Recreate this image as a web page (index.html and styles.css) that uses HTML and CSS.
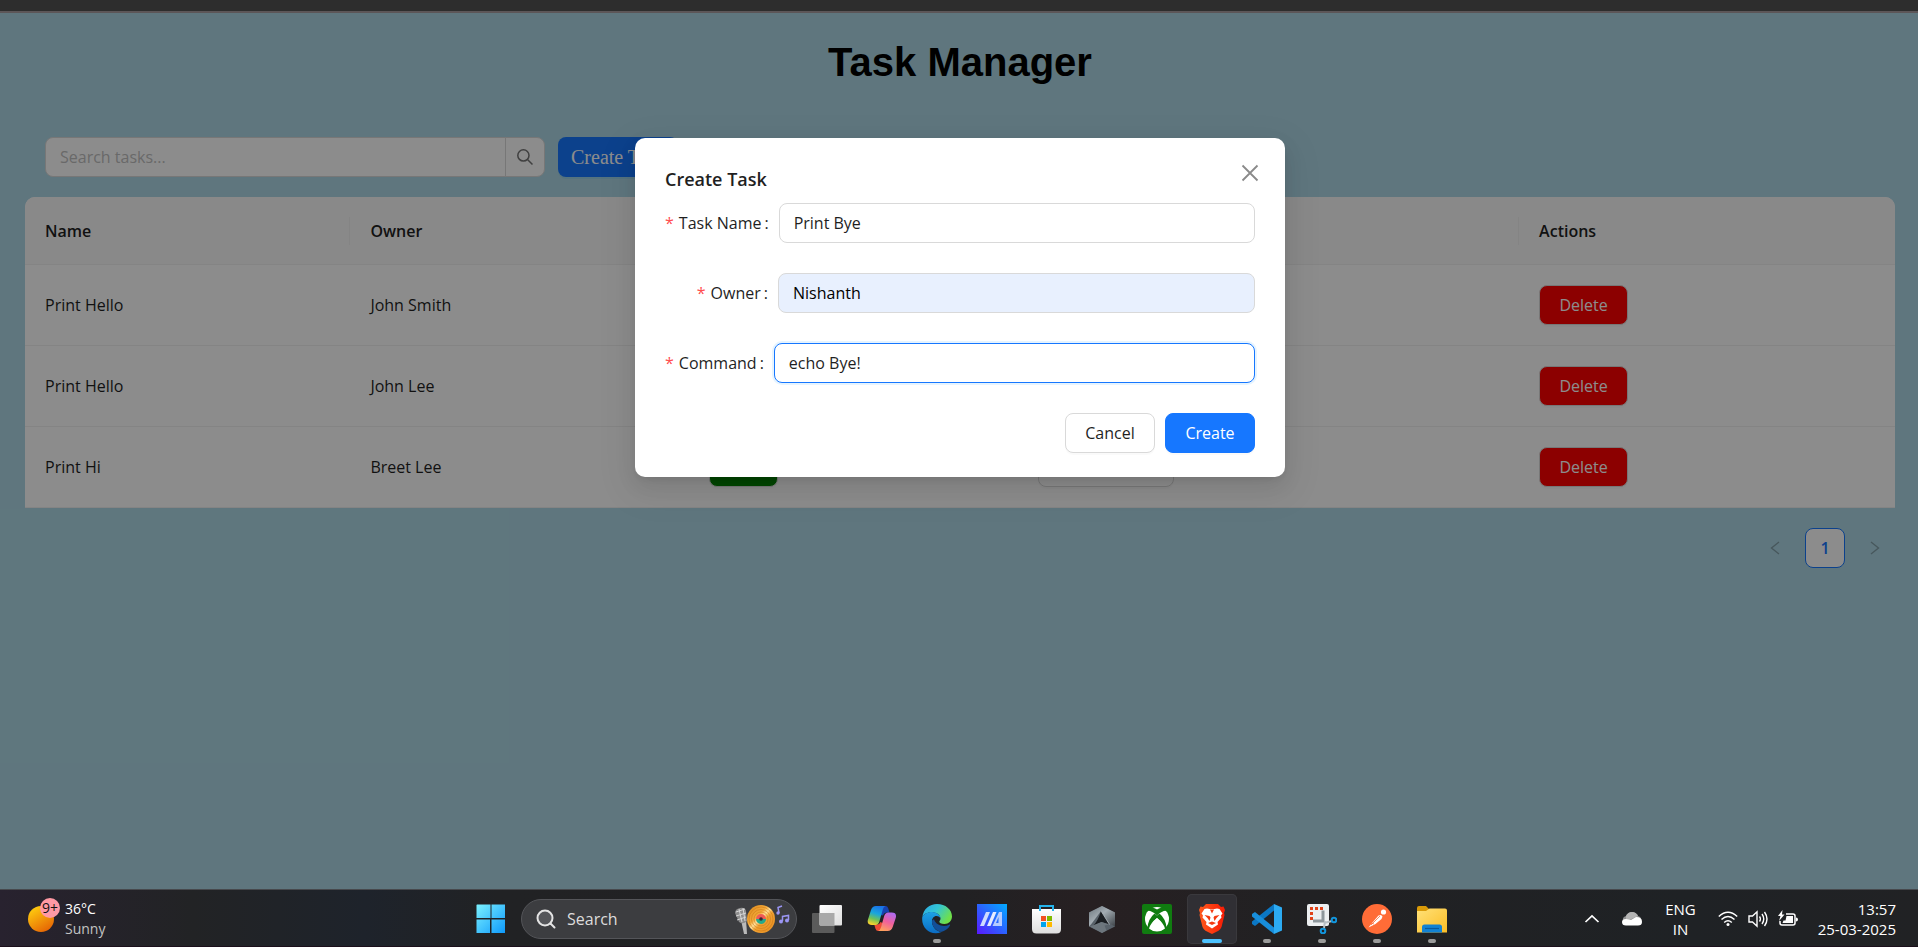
FILE: index.html
```html
<!DOCTYPE html>
<html lang="en">
<head>
<meta charset="utf-8">
<title>Task Manager</title>
<link rel="stylesheet" href="styles.css">
</head>
<body>
<div class="browser-edge"></div>
<main class="app">
  <h1 class="app-title">Task Manager</h1>
  <div class="toolbar">
    <form class="search" role="search">
      <input class="search-input" type="text" placeholder="Search tasks..." aria-label="Search tasks">
      <button class="search-button" type="button" aria-label="Search">
        <svg width="18" height="18" viewBox="0 0 18 18" fill="none" stroke="#757575" stroke-width="1.5"><circle cx="7.4" cy="7.4" r="5.6"/><path d="M11.5 11.5 16.500 16.500"/></svg>
      </button>
    </form>
    <button class="create-task" type="button">Create Task</button>
  </div>
  <table class="tasks">
    <colgroup><col class="col-name"><col class="col-owner"><col class="col-run"><col class="col-output"><col class="col-actions"></colgroup>
    <thead>
      <tr><th>Name</th><th>Owner</th><th></th><th></th><th>Actions</th></tr>
    </thead>
    <tbody>
      <tr><td>Print Hello</td><td>John Smith</td><td></td><td></td><td><button class="btn btn-delete" type="button">Delete</button></td></tr>
      <tr><td>Print Hello</td><td>John Lee</td><td></td><td></td><td><button class="btn btn-delete" type="button">Delete</button></td></tr>
      <tr><td>Print Hi</td><td>Breet Lee</td><td><button class="btn btn-run" type="button" aria-label="Run"></button></td><td><button class="btn btn-output" type="button" aria-label="View output"></button></td><td><button class="btn btn-delete" type="button">Delete</button></td></tr>
    </tbody>
  </table>
  <nav class="pagination" aria-label="Pages">
    <button class="page-arrow" type="button" aria-label="Previous page"><svg width="10" height="16" viewBox="0 0 10 16" fill="none" stroke="currentColor" stroke-width="1.4"><path d="M9 2 1.5 8 9 14"/></svg></button>
    <button class="page-number" type="button">1</button>
    <button class="page-arrow" type="button" aria-label="Next page"><svg width="10" height="16" viewBox="0 0 10 16" fill="none" stroke="currentColor" stroke-width="1.4"><path d="M1 2 8.500 8 1 14"/></svg></button>
  </nav>

  <div class="overlay">
    <section class="modal" role="dialog" aria-labelledby="modal-title">
      <button class="modal-close" type="button" aria-label="Close"><svg width="18" height="18" viewBox="0 0 18 18" fill="none" stroke="#8a8a8a" stroke-width="1.8"><path d="M1.500 1.500 16.500 16.500M16.500 1.500 1.500 16.500"/></svg></button>
      <h2 class="modal-title" id="modal-title">Create Task</h2>
      <form class="form">
        <div class="field"><label for="task-name"><span class="required">*</span>Task Name<span class="colon">:</span></label><input id="task-name" type="text" value="Print Bye"></div>
        <div class="field"><label class="short" for="owner"><span class="required">*</span>Owner<span class="colon">:</span></label><input class="autofilled" id="owner" type="text" value="Nishanth"></div>
        <div class="field"><label for="command"><span class="required">*</span>Command<span class="colon">:</span></label><input class="focused" id="command" type="text" value="echo Bye!"></div>
        <div class="form-actions">
          <button class="btn btn-cancel" type="button">Cancel</button>
          <button class="btn btn-primary" type="button">Create</button>
        </div>
      </form>
    </section>
  </div>
</main>

<footer class="taskbar">
  <button class="weather" type="button">
    <svg width="34" height="42" viewBox="0 0 34 42">
      <defs><linearGradient id="sun" x1=".2" y1="0" x2=".8" y2="1"><stop offset="0" stop-color="#ffd00f"/><stop offset="1" stop-color="#e45f04"/></linearGradient></defs>
      <circle cx="14" cy="21" r="13" fill="url(#sun)"/><circle cx="23" cy="10" r="10" fill="#ff99a4"/>
      <text class="badge-text" x="23" y="15" text-anchor="middle">9+</text>
    </svg>
    <span class="weather-text"><span>36°C</span><span class="muted">Sunny</span></span>
  </button>

  <div class="launcher">
    <button class="tile" type="button" aria-label="Start">
      <svg width="30" height="30" viewBox="0 0 30 30"><defs><linearGradient id="win" gradientUnits="userSpaceOnUse" x1="0" y1="0" x2="30" y2="30"><stop offset="0" stop-color="#7df3ff"/><stop offset="1" stop-color="#0a96fb"/></linearGradient></defs><path fill="url(#win)" d="M1 .5h13.500V14H.5V1zM15.500.5H29V1 14H15.500zM.5 15.500H14V29H.5zM15.500 15.500H29V29H15.500z"/></svg>
    </button>
    <button class="taskbar-search" type="button">
      <svg width="20" height="20" viewBox="0 0 20 20" fill="#55565a" stroke="#e4e4e4" stroke-width="2" stroke-linecap="round"><circle cx="9" cy="9" r="7.500"/><path d="m14.500 14.500 4 4"/></svg>
      <span class="search-label">Search</span>
      <svg width="56" height="34" viewBox="0 0 56 34">
        <defs><linearGradient id="disc" x1="0" y1="0" x2="1" y2="1"><stop offset="0" stop-color="#d98519"/><stop offset=".38" stop-color="#f3a93a"/><stop offset=".48" stop-color="#ffe09a"/><stop offset=".58" stop-color="#f0a132"/><stop offset="1" stop-color="#e58b1f"/></linearGradient></defs>
        <path d="m7 18 5-1 1 15h-3z" fill="#b9b9b9"/><path d="M1 11q0-4 5-5 5-1 6 3l1 10q-4 4-8 1z" fill="#8d8d8d"/><path d="m2 10 9-3M2 14l10-3M3 18l9-3M5 7l3 13M9 6l2 13" stroke="#d6d6d6"/>
        <circle cx="27" cy="17" r="14" fill="url(#disc)"/><g fill="none" stroke="#c87513" stroke-width=".5"><circle cx="27" cy="17" r="12"/><circle cx="27" cy="17" r="9.500"/><circle cx="27" cy="17" r="7"/></g>
        <path d="M22 17a5 5 0 0 1 10 0z" fill="#ef5a55"/><path d="M22 17a5 5 0 0 0 10 0z" fill="#24a98c"/><circle cx="27" cy="17" r="1.800" fill="#3a2630"/>
        <g fill="none" stroke="#9a95f3" stroke-width="1.500"><path d="m45 11-1-5.500 4-1.500M48.500 19v-4.500l6-1V18"/></g><g fill="#9a95f3"><circle cx="44" cy="11" r="1.700"/><circle cx="47" cy="19.500" r="2"/><circle cx="53" cy="18.500" r="2"/></g>
      </svg>
    </button>
    <button class="tile" type="button" aria-label="Task view">
      <svg width="30" height="30" viewBox="0 0 30 30"><defs><linearGradient id="tv" x1="0" y1="0" x2="1" y2="1"><stop offset="0" stop-color="#fff"/><stop offset="1" stop-color="#dedede"/></linearGradient></defs><rect y="9" width="22.500" height="20" rx="1" fill="#5b5b5b"/><rect x="7.500" y="1" width="22.500" height="20.500" rx="1" fill="url(#tv)"/><path d="M7.500 9h15v12.500H8.500a1 1 0 0 1-1-1z" fill="#a9a9a9"/></svg>
    </button>
    <button class="tile" type="button" aria-label="Copilot">
      <svg width="30" height="30" viewBox="0 0 30 30"><defs>
        <linearGradient id="cpa" x1=".6" y1="0" x2=".3" y2="1"><stop offset="0" stop-color="#1a72e8"/><stop offset=".4" stop-color="#19a6dd"/><stop offset=".7" stop-color="#6fc257"/><stop offset="1" stop-color="#ffd12b"/></linearGradient>
        <linearGradient id="cpb" x1=".7" y1="0" x2=".3" y2="1"><stop offset="0" stop-color="#b06af0"/><stop offset=".5" stop-color="#f0609c"/><stop offset="1" stop-color="#ffa25c"/></linearGradient></defs>
        <path d="M16 2h2.500q2 0 2.700 2.200L22.500 8.500H20q-3 0-4 3L13.500 11z" fill="#1742b0"/>
        <path d="M13.500 27h-2.300q-2 0-2.700-2.200L7.200 20.500H10q2.500 0 3.500-2.500l2 1z" fill="#ee4a35"/>
        <path d="M9 2h9.500q-1.800.4-2.600 3.200L12.500 17q-1 4-4 4H5q-5.500 0-4-5.500L4 6Q5.300 2 9 2z" fill="url(#cpa)"/>
        <path d="M20.700 27h-9.500q1.800-.4 2.600-3.200L17.200 12q1-3.500 4-3.500h3.500q5.500 0 4 5.500l-3 9Q24.400 27 20.700 27z" fill="url(#cpb)"/></svg>
    </button>
    <button class="tile running" type="button" aria-label="Edge">
      <svg width="30" height="30" viewBox="0 0 30 30"><defs><linearGradient id="edg" x1="0" y1="0" x2="1" y2=".5"><stop offset="0" stop-color="#2aa8e8"/><stop offset=".5" stop-color="#33c5d4"/><stop offset="1" stop-color="#6fe04a"/></linearGradient><linearGradient id="edb" x1="0" y1="0" x2="0" y2="1"><stop offset="0" stop-color="#1da2e4"/><stop offset="1" stop-color="#0b6cc4"/></linearGradient></defs>
      <path d="M.3 13C1.500 5 7.500 0 15 0c8.500 0 15 5.500 15 12.500 0 4.500-3.500 7.500-7.500 7.500-3.500 0-5.200-1.300-5.200-2.300 0-.7 1.200-1.200 1.200-3.200 0-3-3-5.500-6.500-6C7 7.800 2 9.500.3 13z" fill="url(#edg)"/>
      <path d="M.3 13C2 9.500 6 8 10 8c4.500 0 8.500 3 8.500 6.500-1-1.800-2.500-2.500-4-2.500-3 0-5 3-4.500 6.500.7 5.500 5 9 9.500 9.500C9 32.500-1.200 24 .3 13z" fill="url(#edb)"/>
      <path d="M10 16.500c-.5 6 4 10 9 11.500 4-1 7.500-3.500 9-6.500.4-.8-.1-1.200-.8-.8-5 2.500-13 1.300-15.200-5.500z" fill="#124f98"/></svg>
    </button>
    <button class="tile" type="button" aria-label="MyASUS">
      <svg width="30" height="30" viewBox="0 0 30 30"><defs><linearGradient id="asus" x1="0" y1="1" x2="1" y2="0"><stop offset="0" stop-color="#5a18ff"/><stop offset=".5" stop-color="#2b63ff"/><stop offset="1" stop-color="#00acff"/></linearGradient></defs><path fill="url(#asus)" d="M0 0h30v30H0z"/><path d="m3 22 6-14h4L7 22z" fill="#cfdcff"/><path d="m10 22 6-14h3.500l-6 14z" fill="#e6edff"/><path d="M15.500 22 22 8h3v14h-3.500v-9L19 19h2.500v3z" fill="#b5ccff"/></svg>
    </button>
    <button class="tile" type="button" aria-label="Microsoft Store">
      <svg width="30" height="30" viewBox="0 0 30 30"><defs><linearGradient id="bag" x1="0" y1="0" x2="0" y2="1"><stop offset="0" stop-color="#fff"/><stop offset="1" stop-color="#dedede"/></linearGradient></defs><path d="M0 5h29v20q0 4.500-4.500 4.500h-20Q0 29.500 0 25z" fill="url(#bag)"/><path d="M8 7V2h13v5" fill="none" stroke="#25b4ec" stroke-width="2"/><path fill="#f25022" d="M9 12h5v5H9z"/><path fill="#7fba00" d="M15 12h5v5h-5z"/><path fill="#00a4ef" d="M9 18h5v5H9z"/><path fill="#ffb900" d="M15 18h5v5h-5z"/></svg>
    </button>
    <button class="tile" type="button" aria-label="Armoury Crate">
      <svg width="30" height="30" viewBox="0 0 30 30"><defs><linearGradient id="crate" x1="0" y1="0" x2="1" y2="1"><stop offset="0" stop-color="#6b757c"/><stop offset=".45" stop-color="#a3acb2"/><stop offset="1" stop-color="#3c4247"/></linearGradient></defs><path d="M15 2 28 8.500v14L15 29 2 22.500v-14z" fill="#59626a"/><path d="M15 2 28 8.500v14l-6-3L14 7 4 20.500l-2 2v-14z" fill="url(#crate)"/><path d="m14 7 8.500 13.500-8-2.500-8.500 4q5-5 8-15z" fill="#1b1e22"/><path d="m3 22.500 11.500-4.500 8 2.500-5 1 2 5L15 29z" fill="#6d767d"/><path d="m14 7 8.500 13.500" stroke="#bac2c7" stroke-width=".8"/></svg>
    </button>
    <button class="tile" type="button" aria-label="Xbox">
      <svg width="30" height="30" viewBox="0 0 30 30"><rect width="30" height="30" rx="2" fill="#107c10"/><circle cx="15" cy="15" r="12" fill="#fff"/><path d="M5 7q4-1 10 4.500Q21 6 25 7l-2-2.500Q19 2.500 15 5.500 11 2.500 7 4.500z" fill="#107c10"/><path d="M12.500 9.500Q6 15 5.500 24L3.500 21l-1 3 5 4 .500-2Q9 19 15 14q6 5 7 12l2 2 4-5-1.500-2-2 3Q24 15 17.500 9.500L15 11.500z" fill="#107c10"/><path d="M15 14q-6.500 5-8 10.500Q10.500 27.500 15 27.500t8-3Q21.500 19 15 14z" fill="#fff"/></svg>
    </button>
    <button class="tile active" type="button" aria-label="Brave">
      <svg width="30" height="30" viewBox="0 0 30 30"><defs><linearGradient id="brave" x1="0" x2="1"><stop offset="0" stop-color="#ff5a1c"/><stop offset="1" stop-color="#f71b05"/></linearGradient></defs><path d="M9 0h12l3 3 2.500-.5L28 6l-1 3 .5 2-3 12q-1 2.500-3 3.800L15 30l-6.500-3.200q-2-1.300-3-3.800l-3-12 .5-2-1-3 1.500-3.500L6 3z" fill="url(#brave)"/><path d="m10 4.500 5 1 5-1 2.500.5 3 4.500-1.500 2 .5 2-4 4.500.5 2.500-3 2-3 2-3-2-3-2 .5-2.500-4-4.500.5-2-1.500-2 3-4.500z" fill="#fff"/><path d="m7.500 11 5 1 1 1.500-1 3.500-2-3zM22.500 11l-5 1-1 1.500 1 3.500 2-3zM11 19l4-1.500 4 1.500-4 2zM13 5.500l2 4 2-4-2 .5z" fill="#f43a10"/></svg>
    </button>
    <button class="tile running" type="button" aria-label="Visual Studio Code">
      <svg width="30" height="30" viewBox="0 0 30 30"><path d="m0 20 3 2L22 6.500V0L0 17.500z" fill="#0b77c4"/><path d="m0 10 3-2 19 15.500V30L0 12.500z" fill="#188edb"/><path d="M22 0 30 3.500v23L22 30z" fill="#2cabf3"/></svg>
    </button>
    <button class="tile running" type="button" aria-label="Snipping Tool">
      <svg width="30" height="30" viewBox="0 0 30 30"><rect width="22" height="22" rx="2" fill="#eceff1"/><path d="M16 6.500V17H6" fill="none" stroke="#8e979c" stroke-width="3"/><path d="M3 3h3v3H3zm5 0h3v3H8zm5 0h3v3h-3zM3 8h3v3H3zm0 5h3v3H3z" fill="#e04218"/><path d="m17 19 8-2M18 17l-1 7" stroke="#b6bec3" stroke-width="2"/><g fill="none" stroke="#1295dc" stroke-width="2"><circle cx="27" cy="16" r="2.300"/><circle cx="16" cy="27" r="2.300"/></g></svg>
    </button>
    <button class="tile running" type="button" aria-label="Postman">
      <svg width="30" height="30" viewBox="0 0 30 30"><circle cx="15" cy="15" r="15" fill="#ff6c37"/><path d="m6.500 23.500 4-5 6-7 2.500-.5 1.500 1.500-1 2.500-6 5z" fill="#fff"/><circle cx="21.500" cy="8" r="2.600" fill="#fff"/><path d="m9 21 9-9M12 20l-3-1" stroke="#ff6c37" stroke-width=".8"/></svg>
    </button>
    <button class="tile running" type="button" aria-label="File Explorer">
      <svg width="30" height="30" viewBox="0 0 30 30"><defs><linearGradient id="folder" x1="0" y1="0" x2="1" y2="1"><stop offset="0" stop-color="#ffe178"/><stop offset="1" stop-color="#fbbd25"/></linearGradient></defs><path d="M0 4q0-2 2-2h7l3.500 3.500L10 9H0z" fill="#d99a08"/><path d="M0 7h9l3.500-2.500H28q2 0 2 2V28.500H0z" fill="url(#folder)"/><path d="M5 28.500V23q0-2.500 2.500-2.500h15Q25 20.500 25 23v5.500z" fill="#1282d3"/><path d="M8 24.500h14" stroke="#0a599d" stroke-width="1.200"/></svg>
    </button>
  </div>

  <div class="tray">
    <button class="tray-button" type="button" aria-label="Hidden icons"><svg width="16" height="10" viewBox="0 0 16 10" fill="none" stroke="#fff" stroke-width="1.700"><path d="M1.500 8 8 2l6.500 6"/></svg></button>
    <svg class="cloud" width="20" height="14" viewBox="0 0 20 14"><path d="M1 9Q0 5 4 4q2-4 6-4t6 4q4 1 3.500 6z" fill="#8e8e8e"/><path d="M4 4q2-4 6-4t6 4L5 9Q3 6 4 4z" fill="#b4b4b4"/><path d="M0 10q0-3 4-3l5 1 5-3q6 0 6 5 0 3.500-4 3.500H4Q0 13.500 0 10z" fill="#fff"/></svg>
    <div class="stack centered"><span>ENG</span><span>IN</span></div>
    <div class="status-icons">
      <svg width="20" height="16" viewBox="0 0 20 16" fill="none" stroke="#fff" stroke-width="1.500"><path d="M.8 5.500q9.200-8.500 18.400 0M3.500 8.500q6.500-6 13 0M6.200 11.500q3.800-3.400 7.600 0"/><circle cx="10" cy="13.500" r="1.500" fill="#fff" stroke="none"/></svg>
      <svg width="20" height="18" viewBox="0 0 20 18" fill="none" stroke="#fff" stroke-width="1.400"><path d="M1 6h3.500L9 1.800v14.400L4.500 12H1zM11.500 6.500q1.800 2.500 0 5M14 4q3.500 5 0 10M16.500 2q5 7 0 14"/></svg>
      <svg width="20" height="18" viewBox="0 0 20 18"><path d="M8 4h7q2 0 2 2v7q0 2-2 2H4q-2 0-2-2v-2" fill="none" stroke="#fff" stroke-width="1.500"/><path d="M8.500 6H15v7H4.500l1-2.500h2zM18 7.500q2 0 2 2t-2 2zM4.500 0 0 6h2.500L1 11l5.500-6.500H4z" fill="#fff"/></svg>
    </div>
    <div class="stack clock"><span>13:57</span><span>25-03-2025</span></div>
  </div>
</footer>
</body>
</html>
```
FILE: styles.css
```css
* { box-sizing: border-box; }

body {
  margin: 0;
  min-height: 100vh;
  display: flex;
  flex-direction: column;
  font-family: "Open Sans", "Noto Sans", sans-serif;
  font-size: 16px;
  line-height: 24px;
  color: #1f1f1f;
  background: #add8e6;
}

button, input { font: inherit; color: inherit; }
button { margin: 0; padding: 0; border: 0; background: none; }
svg { display: block; flex: none; }

.browser-edge {
  height: 13px;
  background: #2d2d2d;
  border-bottom: 2px solid #5c5658;
}

.app {
  position: relative;
  flex: 1;
  padding: 26px 23px 24px 25px;
}

.app-title {
  margin: 0 0 52px;
  text-align: center;
  font: bold 40px/46px "Liberation Sans", Arial, sans-serif;
  color: #000;
}

.toolbar {
  display: flex;
  gap: 13px;
  padding-left: 20px;
  margin-bottom: 20px;
}

.search { display: flex; width: 500px; }

.search-input {
  flex: 1;
  min-width: 0;
  padding: 0 14px;
  border: 1px solid #d9d9d9;
  border-radius: 8px 0 0 8px;
  background: #fff;
}
.search-input::placeholder { color: #bfbfbf; opacity: 1; }

.search-button {
  display: grid;
  place-items: center;
  width: 40px;
  height: 40px;
  margin-left: -1px;
  border: 1px solid #d9d9d9;
  border-radius: 0 8px 8px 0;
  background: #fff;
}

.create-task {
  height: 40px;
  padding: 0 13px;
  border-radius: 8px;
  background: #1677ff;
  color: #fff;
  font: 20px/24px "Liberation Serif", "Times New Roman", serif;
  box-shadow: 0 2px 0 rgba(5, 145, 255, .1);
}

.tasks {
  width: 100%;
  table-layout: fixed;
  border-collapse: separate;
  border-spacing: 0;
  border-radius: 10px 10px 0 0;
  background: #fff;
}
.col-name { width: 17.4%; }
.col-owner { width: 18.1%; }
.col-run { width: 17.6%; }
.col-output { width: 26.8%; }
.col-actions { width: 20.1%; }

.tasks th, .tasks td {
  padding: 20px;
  text-align: left;
  border-bottom: 1px solid #f0f0f0;
}
.tasks th {
  height: 68px;
  font-weight: 600;
  background: linear-gradient(#f0f0f0, #f0f0f0) right center / 1px 28px no-repeat #fafafa;
}
.tasks th:first-child { border-top-left-radius: 10px; }
.tasks th:last-child { border-top-right-radius: 10px; background: #fafafa; }
.tasks td { height: 81px; }

.btn {
  display: block;
  height: 40px;
  padding: 0 19px;
  border: 1px solid #d9d9d9;
  border-radius: 8px;
  background: #fff;
  box-shadow: 0 2px 0 rgba(0, 0, 0, .02);
}
.btn-delete { min-width: 89px; background: #f00; color: #fff; }
.btn-run { width: 69px; background: #008000; }
.btn-output { width: 136px; }

.pagination {
  display: flex;
  justify-content: flex-end;
  gap: 10px;
  margin-top: 20px;
}
.page-arrow, .page-number {
  display: grid;
  place-items: center;
  width: 40px;
  height: 40px;
  border-radius: 8px;
}
.page-arrow { color: #829fa8; }
.page-number {
  border: 1px solid #1677ff;
  background: #fff;
  color: #1677ff;
  font-weight: 600;
}

.overlay {
  position: absolute;
  inset: 0;
  display: flex;
  justify-content: center;
  align-items: flex-start;
  padding: 125px 16px 16px 18px;
  background: rgba(0, 0, 0, .45);
}

.modal {
  position: relative;
  width: 650px;
  padding: 26px 30px 24px;
  border-radius: 10px;
  background: #fff;
  box-shadow: 0 8px 20px rgba(0, 0, 0, .08), 0 4px 8px -5px rgba(0, 0, 0, .12), 0 11px 35px 10px rgba(0, 0, 0, .05);
}
.modal-close { position: absolute; top: 26px; right: 26px; }

.modal-title {
  margin: 0 0 9px;
  font-size: 18px;
  line-height: 30px;
  font-weight: 600;
}

.form { display: flex; flex-direction: column; gap: 30px; }
.field { display: flex; align-items: center; gap: 10px; }
.field label { display: flex; }
.field .short { justify-content: flex-end; min-width: 103px; }
.required { margin-right: 5px; color: #ff4d4f; }
.colon { margin-left: 3px; }
.field input {
  flex: 1;
  min-width: 0;
  height: 40px;
  padding: 0 14px;
  border: 1px solid #d9d9d9;
  border-radius: 8px;
  outline: 0;
  background: #fff;
}
.field .autofilled { background: #e8f0fe; color: #000; }
.field .focused { border-color: #1677ff; box-shadow: 0 0 0 2px rgba(5, 145, 255, .1); }

.form-actions { display: flex; justify-content: flex-end; gap: 10px; }
.form-actions .btn { min-width: 90px; }
.btn-primary { border-color: #1677ff; background: #1677ff; color: #fff; }

.taskbar {
  display: grid;
  grid-template-columns: 1fr auto 1fr;
  align-items: center;
  height: 58px;
  padding: 1px 22px 0 27px;
  border-top: 1px solid #47494d;
  box-shadow: inset 0 -1px #1b0f1b;
  background: linear-gradient(90deg, #28222f 0, #222325 10%, #1e232b 19%, #212224 26%, #212123 50%, #272022 57%, #212123 68%, #1f2225 88%, #212224 100%);
  color: #fff;
  font-size: 15px;
  line-height: 20px;
}

.weather { display: flex; align-items: center; gap: 4px; text-align: left; }
.weather-text { display: flex; flex-direction: column; font-size: 14px; }
.muted { color: #c3c3c3; }
.badge-text { font-size: 14px; fill: #111; }

.launcher { display: flex; align-items: center; gap: 5px; }
.tile {
  position: relative;
  display: grid;
  place-items: center;
  width: 50px;
  height: 50px;
  border-radius: 5px;
}
.tile.active { background: #302f34; box-shadow: inset 0 0 0 1px #3a393d; }
.tile.running::after, .tile.active::after {
  content: "";
  position: absolute;
  left: 50%;
  bottom: 1px;
  width: 8px;
  height: 4px;
  margin-left: -4px;
  border-radius: 2px;
  background: #9b9b9b;
}
.tile.active::after { width: 20px; margin-left: -10px; background: #4cc2ff; }

.taskbar-search {
  display: flex;
  align-items: center;
  width: 276px;
  height: 40px;
  padding: 0 6px 0 14px;
  border: 1px solid #545559;
  border-radius: 20px;
  background: #3c3d40;
  color: #dcdcdc;
  font-size: 16px;
}
.search-label { flex: 1; padding-left: 11px; text-align: left; }

.tray { display: flex; align-items: center; justify-content: flex-end; }
.tray-button { padding: 4px; margin-right: 18px; }
.cloud { margin-right: 23px; }
.stack { display: flex; flex-direction: column; }
.centered { align-items: center; margin-right: 22px; }
.status-icons { display: flex; align-items: center; gap: 10px; margin-right: 20px; }
.clock { align-items: flex-end; }
```
